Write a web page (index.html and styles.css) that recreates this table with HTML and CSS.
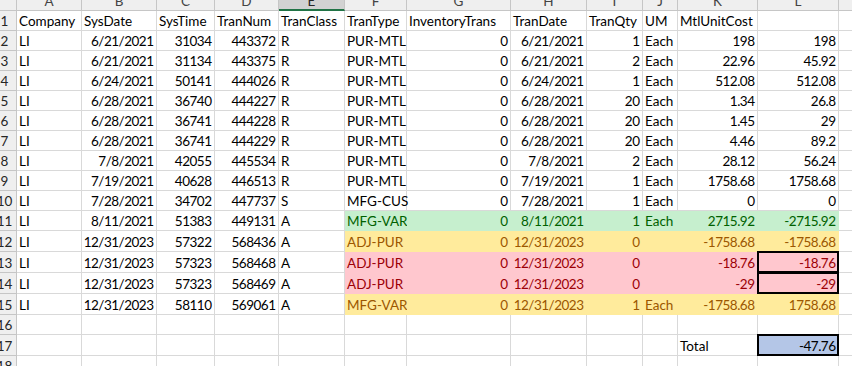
FILE: index.html
```html
<!DOCTYPE html>
<html>
<head>
<meta charset="utf-8">
<link rel="stylesheet" href="styles.css">
</head>
<body>
<div class="sheet">
  <div class="c h corner"></div><div class="c h">A</div><div class="c h">B</div><div class="c h">C</div><div class="c h">D</div><div class="c h sel">E</div><div class="c h">F</div><div class="c h">G</div><div class="c h">H</div><div class="c h">I</div><div class="c h">J</div><div class="c h">K</div><div class="c h">L</div><div class="c h">M</div>

  <div class="c rh">1</div><div class="c">Company</div><div class="c">SysDate</div><div class="c">SysTime</div><div class="c">TranNum</div><div class="c">TranClass</div><div class="c">TranType</div><div class="c">InventoryTrans</div><div class="c">TranDate</div><div class="c">TranQty</div><div class="c">UM</div><div class="c">MtlUnitCost</div><div class="c"></div><div class="c"></div>

  <div class="c rh">2</div><div class="c">LI</div><div class="c r">6/21/2021</div><div class="c r">31034</div><div class="c r">443372</div><div class="c">R</div><div class="c">PUR-MTL</div><div class="c r">0</div><div class="c r">6/21/2021</div><div class="c r">1</div><div class="c">Each</div><div class="c r">198</div><div class="c r">198</div><div class="c"></div>

  <div class="c rh">3</div><div class="c">LI</div><div class="c r">6/21/2021</div><div class="c r">31134</div><div class="c r">443375</div><div class="c">R</div><div class="c">PUR-MTL</div><div class="c r">0</div><div class="c r">6/21/2021</div><div class="c r">2</div><div class="c">Each</div><div class="c r">22.96</div><div class="c r">45.92</div><div class="c"></div>

  <div class="c rh">4</div><div class="c">LI</div><div class="c r">6/24/2021</div><div class="c r">50141</div><div class="c r">444026</div><div class="c">R</div><div class="c">PUR-MTL</div><div class="c r">0</div><div class="c r">6/24/2021</div><div class="c r">1</div><div class="c">Each</div><div class="c r">512.08</div><div class="c r">512.08</div><div class="c"></div>

  <div class="c rh">5</div><div class="c">LI</div><div class="c r">6/28/2021</div><div class="c r">36740</div><div class="c r">444227</div><div class="c">R</div><div class="c">PUR-MTL</div><div class="c r">0</div><div class="c r">6/28/2021</div><div class="c r">20</div><div class="c">Each</div><div class="c r">1.34</div><div class="c r">26.8</div><div class="c"></div>

  <div class="c rh">6</div><div class="c">LI</div><div class="c r">6/28/2021</div><div class="c r">36741</div><div class="c r">444228</div><div class="c">R</div><div class="c">PUR-MTL</div><div class="c r">0</div><div class="c r">6/28/2021</div><div class="c r">20</div><div class="c">Each</div><div class="c r">1.45</div><div class="c r">29</div><div class="c"></div>

  <div class="c rh">7</div><div class="c">LI</div><div class="c r">6/28/2021</div><div class="c r">36741</div><div class="c r">444229</div><div class="c">R</div><div class="c">PUR-MTL</div><div class="c r">0</div><div class="c r">6/28/2021</div><div class="c r">20</div><div class="c">Each</div><div class="c r">4.46</div><div class="c r">89.2</div><div class="c"></div>

  <div class="c rh">8</div><div class="c">LI</div><div class="c r">7/8/2021</div><div class="c r">42055</div><div class="c r">445534</div><div class="c">R</div><div class="c">PUR-MTL</div><div class="c r">0</div><div class="c r">7/8/2021</div><div class="c r">2</div><div class="c">Each</div><div class="c r">28.12</div><div class="c r">56.24</div><div class="c"></div>

  <div class="c rh">9</div><div class="c">LI</div><div class="c r">7/19/2021</div><div class="c r">40628</div><div class="c r">446513</div><div class="c">R</div><div class="c">PUR-MTL</div><div class="c r">0</div><div class="c r">7/19/2021</div><div class="c r">1</div><div class="c">Each</div><div class="c r">1758.68</div><div class="c r">1758.68</div><div class="c"></div>

  <div class="c rh">10</div><div class="c">LI</div><div class="c r">7/28/2021</div><div class="c r">34702</div><div class="c r">447737</div><div class="c">S</div><div class="c">MFG-CUS</div><div class="c r">0</div><div class="c r">7/28/2021</div><div class="c r">1</div><div class="c">Each</div><div class="c r">0</div><div class="c r">0</div><div class="c"></div>

  <div class="c rh">11</div><div class="c">LI</div><div class="c r">8/11/2021</div><div class="c r">51383</div><div class="c r">449131</div><div class="c">A</div><div class="c g">MFG-VAR</div><div class="c g r">0</div><div class="c g r">8/11/2021</div><div class="c g r">1</div><div class="c g">Each</div><div class="c g r">2715.92</div><div class="c g r">-2715.92</div><div class="c"></div>

  <div class="c rh">12</div><div class="c">LI</div><div class="c r">12/31/2023</div><div class="c r">57322</div><div class="c r">568436</div><div class="c">A</div><div class="c y">ADJ-PUR</div><div class="c y r">0</div><div class="c y r">12/31/2023</div><div class="c y r">0</div><div class="c y"></div><div class="c y r">-1758.68</div><div class="c y r">-1758.68</div><div class="c"></div>

  <div class="c rh">13</div><div class="c">LI</div><div class="c r">12/31/2023</div><div class="c r">57323</div><div class="c r">568468</div><div class="c">A</div><div class="c rd">ADJ-PUR</div><div class="c rd r">0</div><div class="c rd r">12/31/2023</div><div class="c rd r">0</div><div class="c rd"></div><div class="c rd r">-18.76</div><div class="c rd r box">-18.76</div><div class="c"></div>

  <div class="c rh">14</div><div class="c">LI</div><div class="c r">12/31/2023</div><div class="c r">57323</div><div class="c r">568469</div><div class="c">A</div><div class="c rd">ADJ-PUR</div><div class="c rd r">0</div><div class="c rd r">12/31/2023</div><div class="c rd r">0</div><div class="c rd"></div><div class="c rd r">-29</div><div class="c rd r box">-29</div><div class="c"></div>

  <div class="c rh">15</div><div class="c">LI</div><div class="c r">12/31/2023</div><div class="c r">58110</div><div class="c r">569061</div><div class="c">A</div><div class="c y">MFG-VAR</div><div class="c y r">0</div><div class="c y r">12/31/2023</div><div class="c y r">1</div><div class="c y">Each</div><div class="c y r">-1758.68</div><div class="c y r">1758.68</div><div class="c"></div>

  <div class="c rh">16</div><div class="c"></div><div class="c"></div><div class="c"></div><div class="c"></div><div class="c"></div><div class="c"></div><div class="c"></div><div class="c"></div><div class="c"></div><div class="c"></div><div class="c"></div><div class="c"></div><div class="c"></div>

  <div class="c rh">17</div><div class="c"></div><div class="c"></div><div class="c"></div><div class="c"></div><div class="c"></div><div class="c"></div><div class="c"></div><div class="c"></div><div class="c"></div><div class="c"></div><div class="c">Total</div><div class="c r tot box">-47.76</div><div class="c"></div>

  <div class="c rh">18</div><div class="c"></div><div class="c"></div><div class="c"></div><div class="c"></div><div class="c"></div><div class="c"></div><div class="c"></div><div class="c"></div><div class="c"></div><div class="c"></div><div class="c"></div><div class="c"></div><div class="c"></div>
</div>
</body>
</html>
```

FILE: styles.css
```css
html, body {
  margin: 0;
  padding: 0;
  background: #ffffff;
  overflow: hidden;
}

.sheet {
  display: grid;
  grid-template-columns: 17px 65px 75px 58px 64px 66px 62px 104px 76px 56px 35px 80px 81px 64px;
  grid-template-rows: 21px repeat(11, 20px) repeat(4, 21px) 20px 21px 20px;
  margin-top: -10px;
  font-family: Lato, "Liberation Sans", sans-serif;
  font-size: 13.5px;
  color: #000000;
  width: 903px;
}

.c {
  box-sizing: border-box;
  border-right: 1px solid #d9d9d9;
  border-bottom: 1px solid #d9d9d9;
  padding: 0 2px 1px 2px;
  display: flex;
  align-items: flex-end;
  justify-content: flex-start;
  white-space: nowrap;
  line-height: normal;
  position: relative;
}

.r {
  justify-content: flex-end;
  letter-spacing: -0.5px;
  padding-right: 2.5px;
}

.h {
  background: #efefef;
  border-right-color: #c6c6c6;
  border-bottom-color: #c6c6c6;
  justify-content: center;
  color: #444444;
  padding-bottom: 1px;
}

.h.sel {
  background: #d2d2d2;
  border-bottom: 2px solid #217346;
  color: #262626;
  padding-bottom: 0;
}

.rh {
  background: #efefef;
  border-right-color: #c6c6c6;
  border-bottom-color: #c6c6c6;
  justify-content: center;
  padding: 0 7px 1px 0;
  color: #262626;
}

.g {
  background: #c6efce;
  border-color: #c6efce;
  color: #006100;
}

.y {
  background: #ffeb9c;
  border-color: #ffeb9c;
  color: #9c5700;
}

.rd {
  background: #ffc7ce;
  border-color: #ffc7ce;
  color: #9c0006;
}

.tot {
  background: #b4c6e7;
  border-color: #b4c6e7;
}

.box::after {
  content: "";
  position: absolute;
  top: -1px;
  left: -1px;
  right: -1px;
  bottom: -1px;
  border: 2px solid #000000;
  z-index: 2;
  pointer-events: none;
}
```
